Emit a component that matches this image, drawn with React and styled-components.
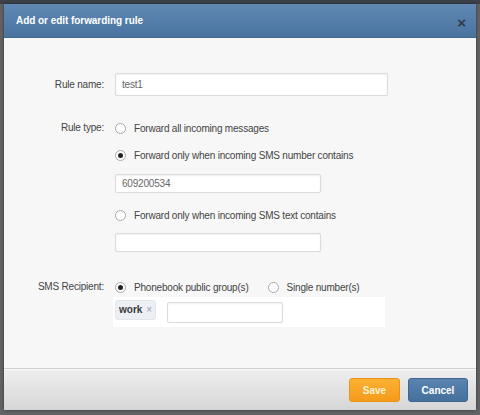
import React from "react";
import styled, { createGlobalStyle } from "styled-components";

const GlobalStyle = createGlobalStyle`
  html, body {
    margin: 0;
    padding: 0;
    background: #5f6062;
  }
  body {
    font-family: "Liberation Sans", Arial, sans-serif;
  }
`;

const Backdrop = styled.div`
  width: 480px;
  height: 415px;
  padding: 4px 4px 0 4px;
  box-sizing: border-box;
  background: linear-gradient(to bottom, #3d4149 0, #3d4149 4px, #626365 4px);
`;

const Dialog = styled.div`
  width: 472px;
  height: 406px;
  display: flex;
  flex-direction: column;
  background: #f7f7f7;
  box-shadow: 0 0 3px rgba(0, 0, 0, 0.5);
`;

const Header = styled.div`
  height: 34px;
  flex-shrink: 0;
  display: flex;
  align-items: center;
  justify-content: space-between;
  padding: 0 10px 0 12px;
  box-sizing: border-box;
  background: linear-gradient(to bottom, #5f89b3, #4a74a0);
  border-bottom: 1px solid #41678f;
`;

const Title = styled.h3`
  margin: 0;
  color: #fff;
  font-size: 10px;
  font-weight: bold;
  letter-spacing: -0.05px;
`;

const Close = styled.span`
  color: #2f3b4a;
  font-size: 15px;
  font-weight: bold;
  line-height: 1;
  margin-top: 3px;
`;

const Body = styled.div`
  flex: 1;
  padding-top: 35px;
`;

const Row = styled.div`
  display: grid;
  grid-template-columns: 100px 1fr;
  column-gap: 11px;
  margin-top: ${(p) => p.gap || 0}px;
`;

const Label = styled.label`
  text-align: right;
  font-size: 10px;
  letter-spacing: -0.2px;
  color: #444;
  line-height: ${(p) => p.lh || 18}px;
`;

const Controls = styled.div`
  display: flex;
  flex-direction: column;
`;

const TextInput = styled.input`
  width: ${(p) => p.w}px;
  height: ${(p) => p.h || 19}px;
  box-sizing: border-box;
  margin-top: ${(p) => p.mt || 0}px;
  padding: 0 6px;
  border: 1px solid #dcdcdc;
  border-radius: 2px;
  background: #fff;
  box-shadow: inset 0 1px 2px rgba(0, 0, 0, 0.06), 0 0 1px rgba(0, 0, 0, 0.08);
  font-family: "Liberation Sans", Arial, sans-serif;
  font-size: 10px;
  letter-spacing: -0.2px;
  color: #666;
  outline: none;
`;

const Options = styled.div`
  display: flex;
  align-items: center;
  gap: 19px;
  margin-top: ${(p) => p.mt || 0}px;
`;

const Option = styled.label`
  display: flex;
  align-items: center;
  gap: 8px;
  height: 18px;
  font-size: 10px;
  letter-spacing: -0.2px;
  color: #444;
`;

const Radio = styled.span`
  width: 11px;
  height: 11px;
  box-sizing: border-box;
  border-radius: 50%;
  border: 1px solid #a9a9a9;
  background: #fff;
  display: flex;
  align-items: center;
  justify-content: center;
  &::after {
    content: "";
    width: 5px;
    height: 5px;
    border-radius: 50%;
    background: ${(p) => (p.checked ? "#222" : "transparent")};
  }
`;

const TagBox = styled.div`
  width: 272px;
  height: 30px;
  margin: 1px 0 0 -2px;
  box-sizing: border-box;
  background: #fff;
  display: flex;
  align-items: center;
  gap: 11px;
  padding: 0 2px;
`;

const Tag = styled.span`
  display: flex;
  align-items: center;
  gap: 4px;
  height: 18px;
  margin-top: -5px;
  padding: 0 3px;
  border-radius: 3px;
  background: #eceff4;
  border: 1px solid #e2e5ea;
  font-size: 10px;
  font-weight: bold;
  color: #3a3a3a;
  span {
    color: #9aa0aa;
    font-weight: normal;
    font-size: 10px;
  }
`;

const Footer = styled.div`
  height: 42px;
  flex-shrink: 0;
  display: flex;
  justify-content: flex-end;
  align-items: flex-start;
  gap: 8px;
  padding: 9px 8px 0 0;
  box-sizing: border-box;
  border-top: 1px solid #cfcfcf;
  background: linear-gradient(to bottom, #efefef, #d6d6d6);
  box-shadow: inset 0 1px 0 #fafafa;
`;

const Button = styled.button`
  height: 24px;
  width: ${(p) => p.w}px;
  border-radius: 3px;
  border: 1px solid ${(p) => (p.primary ? "#e8921a" : "#3f6690")};
  background: ${(p) =>
    p.primary
      ? "linear-gradient(to bottom, #fbb133, #f49b1a)"
      : "linear-gradient(to bottom, #5a84b0, #45709c)"};
  color: ${(p) => (p.primary ? "#fff3d6" : "#fff")};
  font-family: "Liberation Sans", Arial, sans-serif;
  font-size: 10px;
  font-weight: bold;
  padding: 0;
`;

export default function App() {
  return (
    <>
      <GlobalStyle />
      <Backdrop>
        <Dialog>
          <Header>
            <Title>Add or edit forwarding rule</Title>
            <Close>×</Close>
          </Header>
          <Body>
            <Row>
              <Label lh={23}>Rule name:</Label>
              <Controls>
                <TextInput w={273} h={23} defaultValue="test1" />
              </Controls>
            </Row>
            <Row gap={23}>
              <Label>Rule type:</Label>
              <Controls>
                <Option>
                  <Radio />
                  Forward all incoming messages
                </Option>
                <Options mt={9}>
                  <Option>
                    <Radio checked />
                    Forward only when incoming SMS number contains
                  </Option>
                </Options>
                <TextInput w={206} mt={10} defaultValue="609200534" />
                <Options mt={13}>
                  <Option>
                    <Radio />
                    Forward only when incoming SMS text contains
                  </Option>
                </Options>
                <TextInput w={206} mt={9} />
              </Controls>
            </Row>
            <Row gap={26}>
              <Label>SMS Recipient:</Label>
              <Controls>
                <Options>
                  <Option>
                    <Radio checked />
                    Phonebook public group(s)
                  </Option>
                  <Option>
                    <Radio />
                    Single number(s)
                  </Option>
                </Options>
                <TagBox>
                  <Tag>
                    work <span>×</span>
                  </Tag>
                  <TextInput w={116} h={21} />
                </TagBox>
              </Controls>
            </Row>
          </Body>
          <Footer>
            <Button primary w={51}>Save</Button>
            <Button w={60}>Cancel</Button>
          </Footer>
        </Dialog>
      </Backdrop>
    </>
  );
}
